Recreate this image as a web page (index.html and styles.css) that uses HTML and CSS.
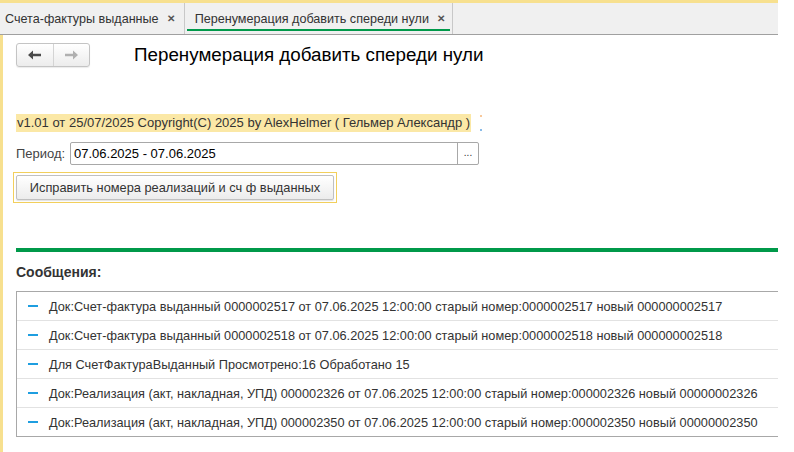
FILE: index.html
```html
<!DOCTYPE html>
<html lang="ru">
<head>
    <meta charset="UTF-8">
    <title>Перенумерация добавить спереди нули</title>
    <link rel="stylesheet" href="styles.css">
</head>
<body>

<div class="window">
    <!-- Вкладки -->
    <div class="tabs">
        <div class="tab">Счета-фактуры выданные <span class="close">&#x2715;</span></div>
        <div class="tab active">Перенумерация добавить спереди нули <span class="close">&#x2715;</span></div>
    </div>

    <div class="content">
        <div class="header">
            <div class="nav">
                <button class="nav-btn">
                    <svg width="14" height="10" viewBox="0 0 14 10"><path d="M0 5 L5 0.5 L5 3.8 L13 3.8 L13 6.2 L5 6.2 L5 9.5 Z" fill="#4a4a4a"/></svg>
                </button>
                <button class="nav-btn">
                    <svg width="14" height="10" viewBox="0 0 14 10"><path d="M14 5 L9 0.5 L9 3.8 L1 3.8 L1 6.2 L9 6.2 L9 9.5 Z" fill="#b0b0b0"/></svg>
                </button>
            </div>
            <h1>Перенумерация добавить спереди нули</h1>
        </div>

        <div class="version-row">
            <span class="version">v1.01 от 25/07/2025 Copyright(C) 2025 by AlexHelmer ( Гельмер Александр )</span>
            <span class="mark"></span>
        </div>

        <div class="period">
            <label>Период:</label>
            <div class="field">
                <span class="value">07.06.2025 - 07.06.2025</span>
                <span class="choose">...</span>
            </div>
        </div>

        <div class="action">
            <button>Исправить номера реализаций и сч ф выданных</button>
        </div>

        <div class="splitter"></div>

        <div class="messages-title">Сообщения:</div>
        <div class="messages">
            <div class="msg"><span class="dash"></span>Док:Счет-фактура выданный 0000002517 от 07.06.2025 12:00:00 старый номер:0000002517 новый 000000002517</div>
            <div class="msg"><span class="dash"></span>Док:Счет-фактура выданный 0000002518 от 07.06.2025 12:00:00 старый номер:0000002518 новый 000000002518</div>
            <div class="msg"><span class="dash"></span>Для СчетФактураВыданный Просмотрено:16 Обработано 15</div>
            <div class="msg"><span class="dash"></span>Док:Реализация (акт, накладная, УПД) 000002326 от 07.06.2025 12:00:00 старый номер:000002326 новый 00000002326</div>
            <div class="msg"><span class="dash"></span>Док:Реализация (акт, накладная, УПД) 000002350 от 07.06.2025 12:00:00 старый номер:000002350 новый 00000002350</div>
        </div>
    </div>
</div>

</body>
</html>
```

FILE: styles.css
```css
body {
    margin: 0;
    padding: 0;
    background-color: #ffffff;
    font-family: "Liberation Sans", Arial, sans-serif;
    font-size: 13px;
    color: #333333;
    overflow: hidden;
}

.window {
    width: 778px;
    height: 452px;
    border-top: 3px solid #f7e08f;
    box-sizing: border-box;
    display: flex;
    flex-direction: column;
}

/* Вкладки */
.tabs {
    display: flex;
    height: 31px;
    background-color: #f0f0f0;
    border-bottom: 1px solid #a0a0a0;
}

.tab {
    display: flex;
    align-items: center;
    padding: 0 9px 0 5px;
    border-right: 1px solid #c8c8c8;
    color: #333333;
    font-size: 12.6px;
    position: relative;
}

.tab .close {
    margin-left: 8px;
    font-size: 10px;
    font-weight: bold;
    color: #555555;
}

.tab.active {
    padding-left: 10px;
    padding-right: 7px;
}

.tab.active::after {
    content: "";
    position: absolute;
    left: 2px;
    right: 2px;
    bottom: 3px;
    height: 2px;
    background-color: #00994a;
}

.content {
    flex: 1;
    border-left: 3px solid #f7e08f;
    padding: 0 0 0 13px;
}

/* Заголовок */
.header {
    display: flex;
    align-items: center;
    margin-top: 8px;
    height: 24px;
}

.nav {
    display: flex;
    width: 74px;
    height: 24px;
    box-sizing: border-box;
    border: 1px solid #c4c4c4;
    border-radius: 3px;
    background: linear-gradient(#ffffff, #ececec);
    box-shadow: 0 1px 1px rgba(0, 0, 0, 0.08);
}

.nav-btn {
    flex: 1;
    border: none;
    background: none;
    padding: 0;
    display: flex;
    align-items: center;
    justify-content: center;
}

.nav-btn:first-child {
    border-right: 1px solid #d4d4d4;
}

h1 {
    margin: 0 0 0 44px;
    font-size: 18.8px;
    font-weight: normal;
    color: #000000;
}

/* Версия */
.version-row {
    display: flex;
    align-items: center;
    margin-top: 47px;
    height: 18px;
}

.version {
    background-color: #fbe8a6;
    padding: 2px 1px;
    line-height: 14px;
}

.mark {
    width: 2px;
    height: 16px;
    margin-left: 9px;
    border-top: 2px solid #f4a55a;
    border-bottom: 2px solid #3b8fd9;
    box-sizing: border-box;
    opacity: 0.6;
}

/* Период */
.period {
    display: flex;
    align-items: center;
    margin-top: 10px;
}

.period label {
    width: 54px;
    color: #444444;
}

.field {
    display: flex;
    width: 409px;
    height: 23px;
    box-sizing: border-box;
    border: 1px solid #a8a8a8;
    border-radius: 2px;
}

.field .value {
    flex: 1;
    padding-left: 3px;
    line-height: 21px;
    color: #000000;
}

.field .choose {
    width: 20px;
    border-left: 1px solid #a8a8a8;
    text-align: center;
    line-height: 19px;
    font-size: 10px;
    color: #333333;
}

/* Кнопка */
.action {
    display: inline-block;
    margin: 7px 0 0 -3px;
    padding: 2px;
    border: 1px solid #f2cf5c;
}

.action button {
    display: block;
    width: 318px;
    height: 25px;
    border: 1px solid #c0c0c0;
    border-radius: 2px;
    background: linear-gradient(#ffffff, #ececec);
    font-family: "Liberation Sans", Arial, sans-serif;
    font-size: 12.8px;
    color: #333333;
    box-shadow: 0 1px 1px rgba(0, 0, 0, 0.12);
}

.splitter {
    margin-top: 45px;
    height: 4px;
    background-color: #00994a;
}

.messages-title {
    margin-top: 12px;
    font-size: 14px;
    font-weight: bold;
    color: #333333;
    line-height: 16px;
}

/* Сообщения */
.messages {
    margin-top: 11px;
    border: 1px solid #a8a8a8;
    border-right: none;
}

.msg {
    display: flex;
    align-items: center;
    height: 28px;
    border-bottom: 1px solid #e2e2e2;
    font-size: 12.75px;
    color: #333333;
}

.msg:last-child {
    border-bottom: none;
}

.dash {
    width: 10px;
    height: 2px;
    background-color: #1e9ee0;
    margin: 0 11px 0 11px;
}
```
